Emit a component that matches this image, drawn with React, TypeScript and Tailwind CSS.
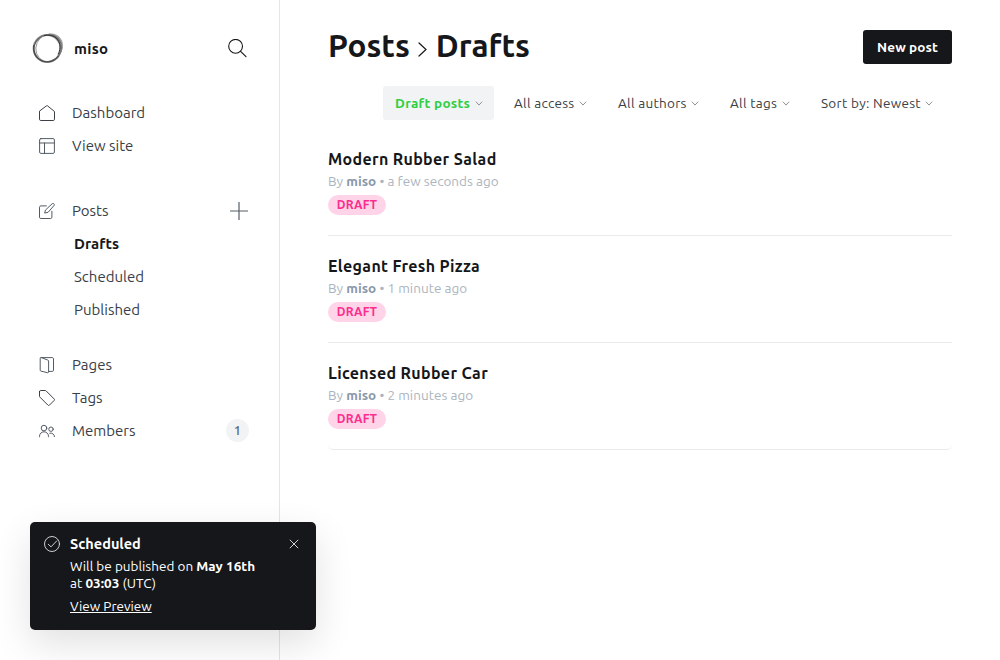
import type { ReactNode } from 'react';

function Icon({ children }: { children: ReactNode }) {
  return (
    <svg className="h-4 w-4 shrink-0 overflow-visible" viewBox="0 0 16 16" fill="none" stroke="#4a535d" strokeWidth="0.95" strokeLinecap="round" strokeLinejoin="round">
      {children}
    </svg>
  );
}

const HomeIcon = () => (
  <Icon><path d="M.5 6.500v7.800c0 .7.5 1.200 1.200 1.200h12.600c.7 0 1.200-.5 1.200-1.200V6.500L8.500.8a.8.8 0 0 0-1 0z" stroke="#30373d" /></Icon>
);
const LayoutIcon = () => (
  <Icon><rect x=".6" y=".6" width="14.8" height="14.8" rx="1.3" /><path d="M.6 5h14.800M5.500 5v10.400" /></Icon>
);
const EditIcon = () => (
  <Icon>
    <path d="M12.900 8.200v6c0 .7-.5 1.300-1.200 1.300H1.800c-.7 0-1.300-.6-1.300-1.300V4.200c0-.7.6-1.300 1.300-1.300h5.600" />
    <path d="m8.700 9.400-3 .7.7-3L13 .9c.6-.6 1.400-.6 1.900-.1s.5 1.400 0 1.900z" />
  </Icon>
);
const PagesIcon = () => (
  <Icon>
    <path d="M1.900.6c-.5.100-.7.500-.7 1v11.600c0 .5.300.8.700.9l6.600 1.600c.6.200 1.100-.2 1.100-.8V4c0-.5-.3-.9-.8-1z" />
    <path d="M1.900.6h11.400c.7 0 1.200.5 1.200 1.100v11.500c0 .7-.5 1.200-1.200 1.200H9.800" />
  </Icon>
);
const TagIcon = () => (
  <Icon><path d="M.5 1.600v4.500c0 .4.100.7.400 1l8 8c.5.500 1.100.5 1.600 0l4.600-4.600c.5-.5.5-1.100 0-1.600l-8-8a1.500 1.500 0 0 0-1-.4H1.600C1 .5.5 1 .5 1.600z" stroke="#30373d" /></Icon>
);
const MembersIcon = () => (
  <Icon>
    <circle cx="5" cy="5.100" r="2.800" />
    <path d="M.5 13.800v-.5a4.500 4.500 0 0 1 9 0v.5" />
    <circle cx="12" cy="6.200" r="2.200" />
    <path d="M10.700 10.200a3.600 3.600 0 0 1 4.800 3.400" />
  </Icon>
);
const Caret = () => (
  <svg className="h-[5px] w-2 shrink-0" viewBox="0 0 8 5" fill="none" stroke="#8b929a" strokeWidth="1">
    <path d="m.9.7 3.100 3.400L7.100.7" />
  </svg>
);

function Logo() {
  return (
    <svg className="h-8 w-8 shrink-0" viewBox="0 0 32 32" fill="none">
      <path d="M14 3C19-.5 27 1.800 30 8.500c2 5 1 11-3.500 15.500 3-5 3.500-11 .5-15.500-3-4-8-6-13-5z" fill="#a5a5a5" />
      <circle cx="15.200" cy="16.600" r="13.500" stroke="#888" strokeWidth="2" />
      <ellipse cx="15.600" cy="16" rx="14.300" ry="13" stroke="#555" strokeWidth="0.9" transform="rotate(-32 16 16)" />
      <ellipse cx="16.800" cy="15.600" rx="12.900" ry="14" stroke="#888" strokeWidth="0.8" transform="rotate(24 16 16)" />
      <path d="M12 3.800c5-2 12 .2 14.700 5.500 2 4 1.600 9-.7 13" stroke="#333" strokeWidth="1" />
      <path d="M1.800 13c-1 8 3.700 15.400 11 16.700 6 .9 11-1.600 13.700-5.700" stroke="#444" strokeWidth="1" />
    </svg>
  );
}

function NavItem({ icon, label, children }: { icon: ReactNode; label: string; children?: ReactNode }) {
  return (
    <a className="flex h-[33px] items-center pl-[39px] pr-[30px] text-[15px] text-[#394047]">
      {icon}
      <span className="ml-[17px] flex-1 pt-0.5">{label}</span>
      {children}
    </a>
  );
}

function SubItem({ label, active }: { label: string; active?: boolean }) {
  return (
    <a className={`flex h-[33px] items-center pl-[74px] pt-0.5 text-[15px] ${active ? 'font-bold tracking-[0.05px] text-[#15171a]' : 'text-[#394047]'}`}>{label}</a>
  );
}

function Sidebar() {
  return (
    <nav className="flex w-[280px] shrink-0 flex-col border-r border-[#e3e5e8]">
      <div className="flex h-24 items-center pl-8 pr-8">
        <Logo />
        <span className="ml-2.5 flex-1 pt-0.5 text-[15px] font-bold tracking-[0.3px] text-[#15171a]">miso</span>
        <svg className="h-[19px] w-[19px]" viewBox="0 0 19 19" fill="none" stroke="#15171a" strokeWidth="1.1" strokeLinecap="round">
          <circle cx="7.600" cy="7.300" r="6.900" />
          <path d="m12.600 12.300 5.400 5.400" />
        </svg>
      </div>
      <div className="mb-8 flex flex-col">
        <NavItem icon={<HomeIcon />} label="Dashboard" />
        <NavItem icon={<LayoutIcon />} label="View site" />
      </div>
      <div className="mb-[22px] flex flex-col">
        <NavItem icon={<EditIcon />} label="Posts">
          <svg className="mr-px mt-px h-[18px] w-[18px]" viewBox="0 0 18 18" stroke="#555e67" strokeWidth="1.2">
            <path d="M9 0v18M0 9h18" />
          </svg>
        </NavItem>
        <SubItem label="Drafts" active />
        <SubItem label="Scheduled" />
        <SubItem label="Published" />
      </div>
      <div className="flex flex-col">
        <NavItem icon={<PagesIcon />} label="Pages" />
        <NavItem icon={<TagIcon />} label="Tags" />
        <NavItem icon={<MembersIcon />} label="Members">
          <span className="flex h-[23px] w-[23px] items-center justify-center rounded-full bg-[#f1f3f4] text-[13px] font-medium text-[#54616f]">1</span>
        </NavItem>
      </div>
    </nav>
  );
}

const filters = [
  { label: 'Draft posts', width: 'w-[111px]', active: true },
  { label: 'All access', width: 'w-24' },
  { label: 'All authors', width: 'w-[104px]' },
  { label: 'All tags', width: 'w-[83px]' },
  { label: 'Sort by: Newest', width: 'w-[135px]' },
];

const posts = [
  { title: 'Modern Rubber Salad', time: 'a few seconds ago' },
  { title: 'Elegant Fresh Pizza', time: '1 minute ago' },
  { title: 'Licensed Rubber Car', time: '2 minutes ago' },
];

function Toast() {
  return (
    <aside className="absolute bottom-[30px] left-[30px] flex h-[108px] w-[286px] rounded-[5px] bg-[#15171a] pl-3.5 pt-3.5 text-[13.5px] text-white shadow-[0_14px_38px_rgba(0,0,0,0.12)]">
      <svg className="h-4 w-4 shrink-0" viewBox="0 0 16 16" fill="none" stroke="#dfe1e3" strokeWidth="0.9" strokeLinecap="round" strokeLinejoin="round">
        <circle cx="8" cy="8" r="7.500" />
        <path d="m4.300 8.300 2.700 2.600 5.700-6" />
      </svg>
      <div className="ml-2.5 flex-1">
        <h2 className="-mt-px h-[23px] text-[14.5px] font-bold leading-[18px]">Scheduled</h2>
        <p className="leading-[17px] tracking-[0.03px]">
          Will be published on <b>May 16th</b>
          <br />
          at <b>03:03</b> (UTC)
        </p>
        <a className="mt-1.5 block leading-[17px] underline">View Preview</a>
      </div>
      <svg className="mr-[17px] mt-[3px] h-2.5 w-2.5" viewBox="0 0 10 10" stroke="#e8e9ea" strokeWidth="0.9">
        <path d="m.8.8 8.400 8.400M9.200.8.8 9.200" />
      </svg>
    </aside>
  );
}

export default function App() {
  return (
    <div className="relative flex h-[660px] w-[1000px] overflow-hidden bg-white font-['Ubuntu','Noto_Sans',sans-serif]">
      <Sidebar />
      <main className="flex flex-1 flex-col pl-12 pr-12">
        <header className="flex h-[64px] items-end justify-between">
          <h1 className="flex h-9 items-center text-[31.5px] font-bold leading-9 text-[#15171a]">
            <span>Posts</span>
            <svg className="ml-2 mr-[9px] mt-1.5 h-[15px] w-[9px]" viewBox="0 0 9 15" fill="none" stroke="#15171a" strokeWidth="1.2" strokeLinecap="round">
              <path d="m1 1 7 6.500L1 14" />
            </svg>
            <span>Drafts</span>
          </h1>
          <button className="h-[34px] w-[89px] rounded-[3px] bg-[#15171a] pt-px text-[13.5px] font-semibold tracking-[0.1px] text-white">New post</button>
        </header>
        <div className="mt-[22px] flex justify-end gap-2 pr-2">
          {filters.map((f) => (
            <button
              key={f.label}
              className={`flex h-[34px] items-center justify-between whitespace-nowrap rounded-[3px] pl-3 pr-[11px] text-[13.5px] tracking-[0.3px] ${f.width} ${f.active ? 'bg-[#f1f3f4] font-bold text-[#30cf43]' : 'text-[#394047]'}`}
            >
              <span className="pt-px">{f.label}</span>
              <Caret />
            </button>
          ))}
        </div>
        <ul className="mt-[9px] flex flex-col">
          {posts.map((p) => (
            <li key={p.title} className="flex h-[107px] flex-col items-start border-b border-[#e9ebed] pt-[19px] last:rounded-[5px]">
              <h3 className="text-[16px] font-semibold leading-[22px] tracking-[0.34px] text-[#15171a]">{p.title}</h3>
              <p className="mt-px text-[13.5px] leading-5 tracking-[0.03px] text-[#abb4be]">
                By <span className="font-semibold text-[#8a98a9]">miso</span> • {p.time}
              </p>
              <span className="mt-1 flex h-5 w-[58px] items-center justify-center rounded-full bg-[#ffd4e8] text-[12px] font-semibold leading-none tracking-[0.15px] text-[#fb2d8d]">DRAFT</span>
            </li>
          ))}
        </ul>
      </main>
      <Toast />
    </div>
  );
}
